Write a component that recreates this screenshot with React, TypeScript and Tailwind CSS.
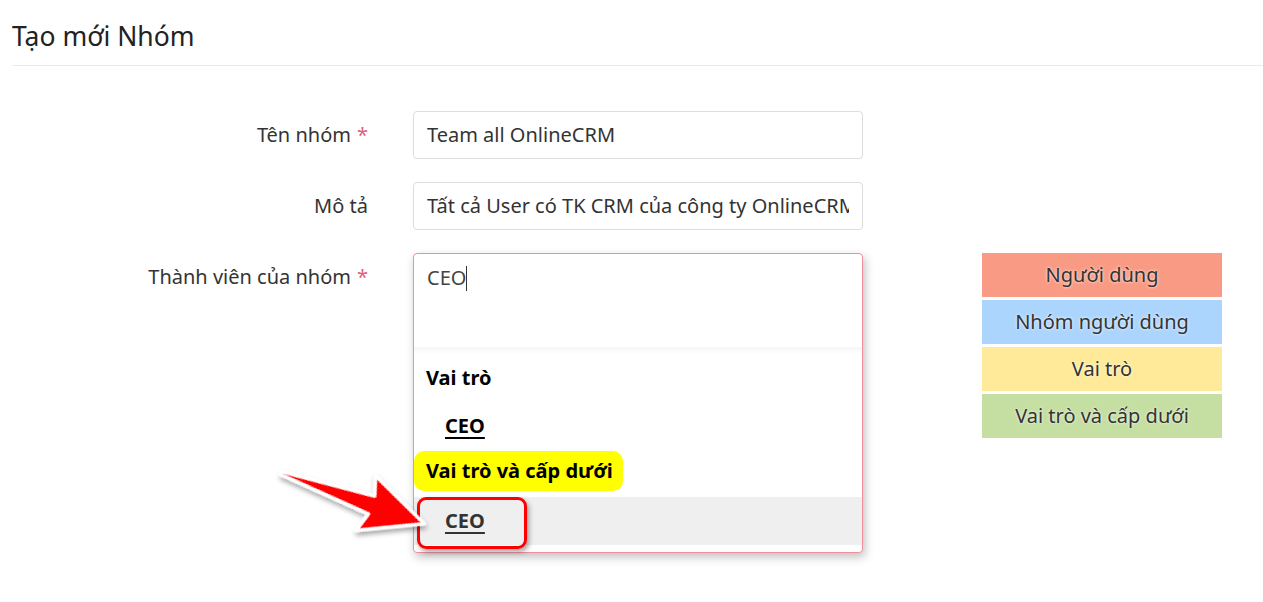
import React from 'react';

const font = { fontFamily: '"Noto Sans", "Open Sans", sans-serif' };

function Arrow() {
  // red pointer arrow with white outline, drawn along the x-axis and rotated
  return (
    <svg className="absolute left-0 top-0 pointer-events-none" width="1263" height="602">
      <defs>
        <filter id="sh" x="-20%" y="-20%" width="140%" height="160%">
          <feDropShadow dx="2" dy="3" stdDeviation="2.5" floodColor="#000" floodOpacity="0.35" />
        </filter>
      </defs>
      <g transform="translate(281 473) rotate(19.5)" filter="url(#sh)">
        <polygon
          points="0,-1.5 96,-9.5 90,-29 152,0 90,29 96,9.5 0,1.5"
          fill="#ff0000"
          stroke="#fff"
          strokeWidth="3.5"
          strokeLinejoin="round"
        />
      </g>
    </svg>
  );
}

function Label({ text, required }: { text: string; required?: boolean }) {
  return (
    <div className="w-[368px] shrink-0 text-right text-[20px] text-[#333] leading-[47px]">
      {text}
      {required && <span className="text-[#e0607e] ml-[6px]">*</span>}
    </div>
  );
}

const legend = [
  { text: 'Người dùng', bg: 'bg-[#f99b84]' },
  { text: 'Nhóm người dùng', bg: 'bg-[#acd5fe]' },
  { text: 'Vai trò', bg: 'bg-[#feea98]' },
  { text: 'Vai trò và cấp dưới', bg: 'bg-[#c5dea2]' },
];

export default function App() {
  return (
    <div className="relative w-[1263px] h-[602px] bg-white overflow-hidden" style={font}>
      <div className="pl-3">
        <h1 className="pt-[19px] pb-[12px] text-[26.5px] leading-[34px] text-[#222] border-b border-[#eaeaea]">
          Tạo mới Nhóm
        </h1>
      </div>

      <div className="pt-[45px] flex flex-col gap-[23px]">
        <div className="flex gap-[45px]">
          <Label text="Tên nhóm" required />
          <div className="w-[450px] shrink-0 h-[48px] border border-[#ddd] rounded-[4px] px-[13px] text-[20px] leading-[46px] text-[#333]">
            Team all OnlineCRM
          </div>
        </div>

        <div className="flex gap-[45px]">
          <Label text="Mô tả" />
          <div className="w-[450px] shrink-0 h-[48px] border border-[#ddd] rounded-[4px] px-[13px] text-[20px] leading-[46px] text-[#333]">
            <div className="overflow-hidden whitespace-nowrap">Tất cả User có TK CRM của công ty OnlineCRM</div>
          </div>
        </div>

        <div className="flex items-start">
          <Label text="Thành viên của nhóm" required />
          <div className="ml-[45px] w-[450px] shrink-0 h-[300px] border border-[#f0909f] rounded-[4px] bg-white shadow-[2px_4px_10px_rgba(0,0,0,0.25)] flex flex-col">
            <div className="h-[93px] px-[13px] pt-[9px] text-[20px] leading-[30px] text-[#444] flex items-start">
              <span>CEO</span>
              <span className="w-px h-[25px] bg-[#333] mt-[3px]" />
            </div>
            <div className="h-[7px] bg-gradient-to-b from-[#f6f6f6] to-white" />
            <div className="text-[20px] font-bold text-black">
              <div className="h-[48px] flex items-center pl-[12px]">Vai trò</div>
              <div className="h-[48px] flex items-center pl-[31px]">
                <span className="underline underline-offset-[4px] decoration-[2px]">CEO</span>
              </div>
              <div className="h-[47px] flex items-start pt-[1px]">
                <span className="bg-[#ffff00] rounded-[10px] pl-[12px] pr-[10px] leading-[40px]">Vai trò và cấp dưới</span>
              </div>
              <div className="h-[48px] flex items-center pl-[31px] bg-[#efefef] text-[#333]">
                <span className="underline underline-offset-[4px] decoration-[2px]">CEO</span>
              </div>
            </div>
          </div>
          <div className="ml-[119px] w-[240px] shrink-0 flex flex-col gap-[3px]">
            {legend.map((l) => (
              <div
                key={l.text}
                className={`${l.bg} h-[44px] flex items-center justify-center text-[20px] text-[#333] [text-shadow:0_0_3px_#fff]`}
              >
                {l.text}
              </div>
            ))}
          </div>
        </div>
      </div>

      <div className="absolute left-[417px] top-[497px] w-[110px] h-[52px] border-[3px] border-[#ff0000] rounded-[9px] shadow-[2px_3px_5px_rgba(0,0,0,0.35)]" />
      <Arrow />
    </div>
  );
}
